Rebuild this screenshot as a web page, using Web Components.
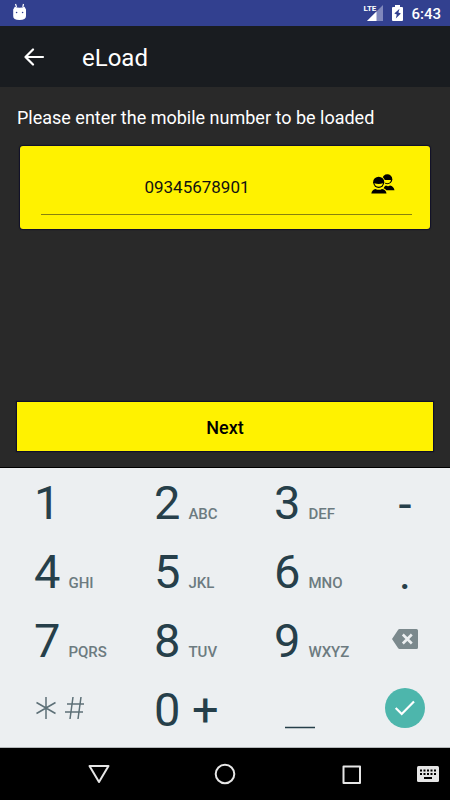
<!DOCTYPE html>
<html lang="en">
<head>
<meta charset="utf-8">
<meta name="viewport" content="width=device-width, initial-scale=1">
<title>eLoad</title>
<style>
  html, body { margin: 0; height: 100%; }
  body { font-family: Roboto, "Noto Sans", sans-serif; background: #292929; }
</style>
</head>
<body>
<eload-screen></eload-screen>

<script>
const define = (name, html, setup) => {
  const template = document.createElement('template');
  template.innerHTML = html;
  customElements.define(name, class extends HTMLElement {
    connectedCallback() {
      if (this.shadowRoot) return;
      this.attachShadow({ mode: 'open' }).append(template.content.cloneNode(true));
      if (setup) setup(this, this.shadowRoot);
    }
  });
};

define('status-bar', `
<style>
  :host { display: flex; align-items: center; height: 26px; padding: 0 9px 0 12px; background: #32408f; color: #fff; box-sizing: border-box; }
  svg { display: block; flex: none; }
  .mascot { margin-right: auto; padding-bottom: 2px; }
  .signal { display: flex; position: relative; margin-right: 9px; }
  .lte { position: absolute; left: 0; top: -1px; font-size: 8px; line-height: 9px; font-weight: 700; }
  .battery { margin-right: 8px; }
  time { font-size: 15px; line-height: 24px; font-weight: 500; padding-top: 2px; }
</style>
<svg class="mascot" width="16" height="18" viewBox="0 0 16 18" fill="#fff" aria-hidden="true">
  <path d="M3.500 1 4.500 4M11.500 1 10.800 4" stroke="#fff" stroke-width="1.200"/>
  <path d="M1.200 6.500 2.800 3.800Q7.500 5.500 12.500 3.800L14 6.500V13Q14 17 7.500 17T1.200 13Z"/>
  <circle cx="4.600" cy="9.500" r=".8" fill="#32408f"/><circle cx="10.600" cy="9.500" r=".8" fill="#32408f"/>
</svg>
<div class="signal"><span class="lte">LTE</span>
<svg width="20" height="16" viewBox="0 0 20 16" aria-hidden="true">
  <path d="M20 0V16H4Z" fill="#8088bc"/><path d="M13.500 6.500V16H4Z" fill="#fff"/>
</svg></div>
<svg class="battery" width="11" height="16" viewBox="0 0 11 16" aria-hidden="true">
  <path d="M3 0H8V2H10Q11 2 11 3V15Q11 16 10 16H1Q0 16 0 15V3Q0 2 1 2H3Z" fill="#fff"/>
  <path d="M7.500 3.800 2.300 8.500 4.800 9.500 3.800 13.500 8.900 8.500 6.400 7.500Z" fill="#32408f"/>
</svg>
<time>6:43</time>`);

define('app-bar', `
<style>
  :host { display: flex; align-items: center; height: 61px; padding: 2px 24px 0; background: #191c20; color: #fff; box-sizing: border-box; }
  button { border: 0; padding: 0 0 2px; background: none; color: inherit; width: 58px; height: 40px; display: flex; align-items: center; box-sizing: border-box; }
  h1 { margin: 0; font-size: 24px; line-height: 32px; font-weight: 400; }
</style>
<button type="button" aria-label="Back">
  <svg width="21" height="18" viewBox="0 0 21 18" fill="none" stroke="#fff" stroke-width="2.200" stroke-linecap="round" stroke-linejoin="round" aria-hidden="true"><path d="M19 9H1.500M9 1.500 1.500 9 9 16.500"/></svg>
</button>
<h1><slot></slot></h1>`);

define('number-card', `
<style>
  :host { display: block; }
  label { display: block; color: #fff; font-size: 18px; line-height: 24px; margin-bottom: 16px; }
  .card { margin: 0 3px; padding: 23px 18px 14px 21px; background: #fff200; border-radius: 3px; box-shadow: 0 0 1px 1px #10102a; }
  .field { display: flex; align-items: flex-start; border-bottom: 1px solid #88810f; height: 45px; }
  input { flex: 1; min-width: 0; height: 36px; padding: 0; border: 0; outline: 0; background: none; text-align: center; font: 400 17px/24px Roboto, "Noto Sans", sans-serif; color: #111; }
  button { flex: none; width: 59px; height: 30px; padding: 0; border: 0; background: none; display: flex; align-items: center; justify-content: center; }
</style>
<label for="number"><slot></slot></label>
<div class="card"><div class="field">
  <input id="number" type="tel" value="09345678901">
  <button type="button" aria-label="Choose a contact">
    <svg width="24" height="20" viewBox="0 0 24 20" aria-hidden="true">
      <circle cx="16.300" cy="5.200" r="5" fill="#000"/>
      <path d="M12.500 6H20Q19.300 9.200 16.300 9.200T12.500 6Z" fill="#fff200"/>
      <path d="M12 16.300Q13 12.200 15 11.600 17 13 19 11.600 22.500 12 23.500 16.300Z" fill="#000"/>
      <circle cx="7.700" cy="8.300" r="6.600" fill="#fff200"/>
      <circle cx="7.700" cy="8.300" r="5.600" fill="#000"/>
      <path d="M3.300 9.300Q7.700 10.500 12.100 9.300 11 12.800 7.700 12.800T3.300 9.300Z" fill="#fff200"/>
      <path d="M-.5 20.500Q0 14 5 14 8 16 11 14 16 14 16.500 20.500Z" fill="#fff200"/>
      <path d="M.3 19.600Q1 15.500 4.500 14.900 8 16.600 11 14.900 15 15.500 15.500 19.600Z" fill="#000"/>
    </svg>
  </button>
</div></div>`);

define('primary-button', `
<style>
  :host { display: block; }
  button { display: block; width: 100%; height: 49px; padding: 2px 0 0; border: 0; background: #fff200; color: #000; box-shadow: 0 0 1px 1px #10102a; font: 500 18px/24px Roboto, "Noto Sans", sans-serif; }
</style>
<button type="button"><slot></slot></button>`);

define('pad-key', `
<style>
  :host { display: block; }
  button { width: 100%; height: 100%; padding: 6px 0 0 34px; border: 0; background: none; display: flex; align-items: baseline; gap: 8px; color: #263f4a; font: 400 47px/56px Roboto, "Noto Sans", sans-serif; text-align: left; box-sizing: border-box; }
  small { font-size: 15px; line-height: 20px; font-weight: 500; color: #6c7b80; }
  :host([side]) button, :host([center]) button { padding: 0; justify-content: center; align-items: center; }
  :host([name]) button { padding: 0 0 5px; }
</style>
<button type="button"></button>`, (host, root) => {
  const button = root.querySelector('button');
  const digit = host.getAttribute('digit');
  const letters = host.getAttribute('letters');
  const name = host.getAttribute('name');
  if (digit) {
    const span = document.createElement('span');
    span.textContent = digit;
    button.append(span);
  }
  if (letters) {
    const small = document.createElement('small');
    small.textContent = letters;
    button.append(small);
  }
  if (name) button.setAttribute('aria-label', name);
  if (!digit) button.append(document.createElement('slot'));
});

define('number-pad', `
<style>
  :host { display: grid; grid-template-columns: 4fr 4fr 4fr 3fr; grid-auto-rows: 69px; padding: 1px 0 2px; background: #eceff1; border-top: 1px solid #000; border-bottom: 1px solid #b4b8ba; box-sizing: border-box; }
  svg { display: block; }
</style>
<pad-key digit="1"></pad-key>
<pad-key digit="2" letters="ABC"></pad-key>
<pad-key digit="3" letters="DEF"></pad-key>
<pad-key side digit="-"></pad-key>
<pad-key digit="4" letters="GHI"></pad-key>
<pad-key digit="5" letters="JKL"></pad-key>
<pad-key digit="6" letters="MNO"></pad-key>
<pad-key side digit="."></pad-key>
<pad-key digit="7" letters="PQRS"></pad-key>
<pad-key digit="8" letters="TUV"></pad-key>
<pad-key digit="9" letters="WXYZ"></pad-key>
<pad-key side name="Delete">
  <svg width="26" height="20" viewBox="0 0 26 20" aria-hidden="true"><path d="M7.500 0H24.500Q26 0 26 1.500V18.500Q26 20 24.500 20H7.500Q6.600 20 6 19L0 10 6 1Q6.600 0 7.500 0Z" fill="#7b898d"/><path d="M10.800 5.500 19.800 14.500M19.800 5.500 10.800 14.500" stroke="#eceff1" stroke-width="2.600"/></svg>
</pad-key>
<pad-key center name="Star and hash">
  <svg width="49" height="24" viewBox="0 0 49 24" fill="none" stroke="#5d7077" stroke-width="1.500" aria-hidden="true"><path d="M10 1V23M.5 6.500 19.500 17.500M19.500 6.500 .5 17.500M37 1 34 23M45 1 42 23M31 8H48M29 16H47"/></svg>
</pad-key>
<pad-key digit="0 +"></pad-key>
<pad-key center name="Space">
  <svg width="30" height="42" viewBox="0 0 30 42" aria-hidden="true"><path d="M0 40.500H30" stroke="#263f4a" stroke-width="1.500"/></svg>
</pad-key>
<pad-key side name="Done">
  <svg width="40" height="40" viewBox="0 0 40 40" aria-hidden="true"><circle cx="20" cy="20" r="20" fill="#4db6ac"/><path d="M10.700 20 16.700 26 29 13.500" fill="none" stroke="#fff" stroke-width="2.200"/></svg>
</pad-key>`);

define('nav-bar', `
<style>
  :host { display: grid; grid-template-columns: 4fr 7fr 4fr; height: 52px; background: #000; box-sizing: border-box; }
  button { border: 0; padding: 0; background: none; display: flex; align-items: center; justify-content: center; }
  .back { justify-content: flex-end; padding-right: 10px; }
  .right { display: flex; align-items: center; justify-content: space-between; padding: 0 11px 0 12px; }
  svg { display: block; }
</style>
<button class="back" type="button" aria-label="Back"><svg width="22" height="20" viewBox="0 0 22 20" fill="none" stroke="#e6e6e6" stroke-width="2" stroke-linejoin="round" aria-hidden="true"><path d="M1.500 2H20.500L11 18Z"/></svg></button>
<button type="button" aria-label="Home"><svg width="22" height="22" viewBox="0 0 22 22" fill="none" stroke="#e6e6e6" stroke-width="2" aria-hidden="true"><circle cx="11" cy="11" r="9.300"/></svg></button>
<div class="right">
<button type="button" aria-label="Recent apps"><svg width="19" height="19" viewBox="0 0 19 19" fill="none" stroke="#e6e6e6" stroke-width="2" stroke-linejoin="round" aria-hidden="true"><rect x="1.500" y="1.500" width="16.500" height="16.500"/></svg></button>
<button type="button" aria-label="Choose keyboard"><svg width="22" height="16" viewBox="0 0 22 16" aria-hidden="true"><rect width="22" height="16" rx="1.500" fill="#e6e6e6"/><path d="M3 4.500H19M3 8H19" stroke="#000" stroke-width="2" stroke-dasharray="2 1.500"/><path d="M7 12H15" stroke="#000" stroke-width="2"/></svg></button>
</div>`);

define('eload-screen', `
<style>
  :host { display: flex; flex-direction: column; min-height: 100vh; background: #292929; }
  main { flex: 1; display: flex; flex-direction: column; justify-content: space-between; padding: 19px 17px 16px; }
</style>
<status-bar></status-bar>
<app-bar>eLoad</app-bar>
<main>
  <number-card>Please enter the mobile number to be loaded</number-card>
  <primary-button>Next</primary-button>
</main>
<number-pad></number-pad>
<nav-bar></nav-bar>`);
</script>
</body>
</html>
